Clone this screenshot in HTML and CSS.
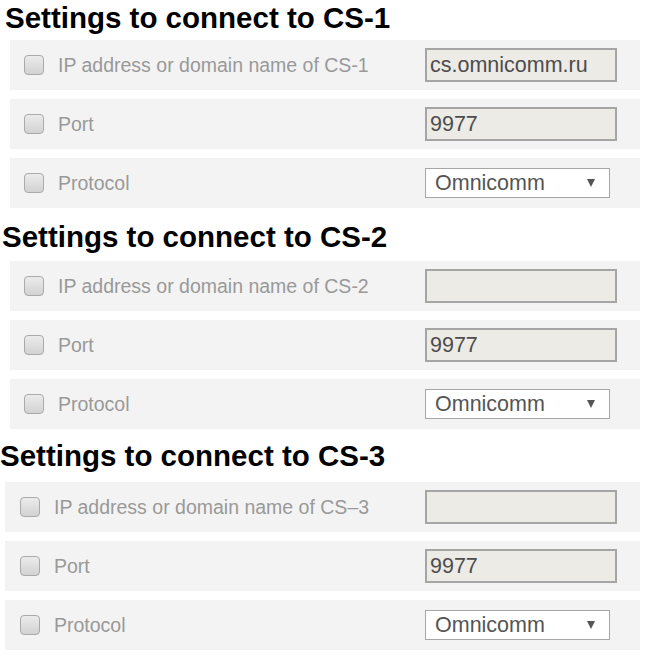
FILE: index.html
```html
<!DOCTYPE html>
<html lang="en">
<head>
<meta charset="utf-8">
<title>Settings</title>
<link rel="stylesheet" href="styles.css">
</head>
<body>
<div class="page">
  <section class="group group-1">
    <h2 class="group-title">Settings to connect to CS-1</h2>
    <div class="rows">
      <div class="row">
        <div class="row-main"><span class="check"></span><span class="label">IP address or domain name of CS-1</span></div>
        <div class="field"><span class="input">cs.omnicomm.ru</span></div>
      </div>
      <div class="row">
        <div class="row-main"><span class="check"></span><span class="label">Port</span></div>
        <div class="field"><span class="input">9977</span></div>
      </div>
      <div class="row">
        <div class="row-main"><span class="check"></span><span class="label">Protocol</span></div>
        <div class="field"><span class="select"><span>Omnicomm</span><svg class="arrow" width="8" height="8" viewBox="0 0 8 8"><path d="M0 0H8L4 8Z" fill="#555"/></svg></span></div>
      </div>
    </div>
  </section>
  <section class="group group-2">
    <h2 class="group-title">Settings to connect to CS-2</h2>
    <div class="rows">
      <div class="row">
        <div class="row-main"><span class="check"></span><span class="label">IP address or domain name of CS-2</span></div>
        <div class="field"><span class="input"></span></div>
      </div>
      <div class="row">
        <div class="row-main"><span class="check"></span><span class="label">Port</span></div>
        <div class="field"><span class="input">9977</span></div>
      </div>
      <div class="row">
        <div class="row-main"><span class="check"></span><span class="label">Protocol</span></div>
        <div class="field"><span class="select"><span>Omnicomm</span><svg class="arrow" width="8" height="8" viewBox="0 0 8 8"><path d="M0 0H8L4 8Z" fill="#555"/></svg></span></div>
      </div>
    </div>
  </section>
  <section class="group group-3">
    <h2 class="group-title">Settings to connect to CS-3</h2>
    <div class="rows">
      <div class="row">
        <div class="row-main"><span class="check"></span><span class="label">IP address or domain name of CS–3</span></div>
        <div class="field"><span class="input"></span></div>
      </div>
      <div class="row">
        <div class="row-main"><span class="check"></span><span class="label">Port</span></div>
        <div class="field"><span class="input">9977</span></div>
      </div>
      <div class="row">
        <div class="row-main"><span class="check"></span><span class="label">Protocol</span></div>
        <div class="field"><span class="select"><span>Omnicomm</span><svg class="arrow" width="8" height="8" viewBox="0 0 8 8"><path d="M0 0H8L4 8Z" fill="#555"/></svg></span></div>
      </div>
    </div>
  </section>
</div>
</body>
</html>
```
FILE: styles.css
```css
body {
  margin: 0;
  background: #fff;
  font-family: "Liberation Sans", Arial, sans-serif;
}

.page {
  width: 647px;
}

.group-title {
  margin: 0;
  font-size: 29.5px;
  line-height: 32px;
  font-weight: bold;
  color: #000;
}

.rows {
  display: flex;
  flex-direction: column;
  gap: 9px;
  margin-right: 7px;
}

.row {
  height: 50px;
  background: #f3f3f3;
  display: grid;
  grid-template-columns: 1fr 215px;
  align-items: center;
}

.row-main {
  display: flex;
  align-items: center;
  gap: 14px;
  padding-left: 14px;
}

.check {
  box-sizing: border-box;
  width: 20px;
  height: 20px;
  border: 1px solid #aaaaaa;
  border-radius: 4px;
  background: linear-gradient(#ebebeb, #d2d2d2);
  flex: none;
}

.label {
  font-size: 19.5px;
  color: #999999;
  white-space: nowrap;
}

.field {
  display: flex;
  align-items: center;
}

.input {
  box-sizing: border-box;
  width: 192px;
  height: 34px;
  border: 2px solid #a5a5a5;
  background: #ecebe5;
  font-size: 21.5px;
  color: #4d4d4d;
  padding-left: 3px;
  display: flex;
  align-items: center;
}

.select {
  box-sizing: border-box;
  width: 185px;
  height: 30px;
  border: 1px solid #a6a6a6;
  background: #fff;
  display: flex;
  align-items: center;
  justify-content: space-between;
  padding: 0 14px 0 9px;
  font-size: 21.5px;
  color: #555;
}

.arrow {
  flex: none;
}

.group-1 .group-title {
  margin-top: 2px;
  padding-left: 5px;
}
.group-1 .rows {
  margin-top: 6px;
  margin-left: 10px;
}

.group-2 .group-title {
  margin-top: 13px;
  padding-left: 2px;
}
.group-2 .rows {
  margin-top: 8px;
  margin-left: 10px;
}

.group-3 .group-title {
  margin-top: 11px;
  padding-left: 0;
}
.group-3 .rows {
  margin-top: 10px;
  margin-left: 5px;
}
.group-3 .row-main {
  padding-left: 15px;
}
```
